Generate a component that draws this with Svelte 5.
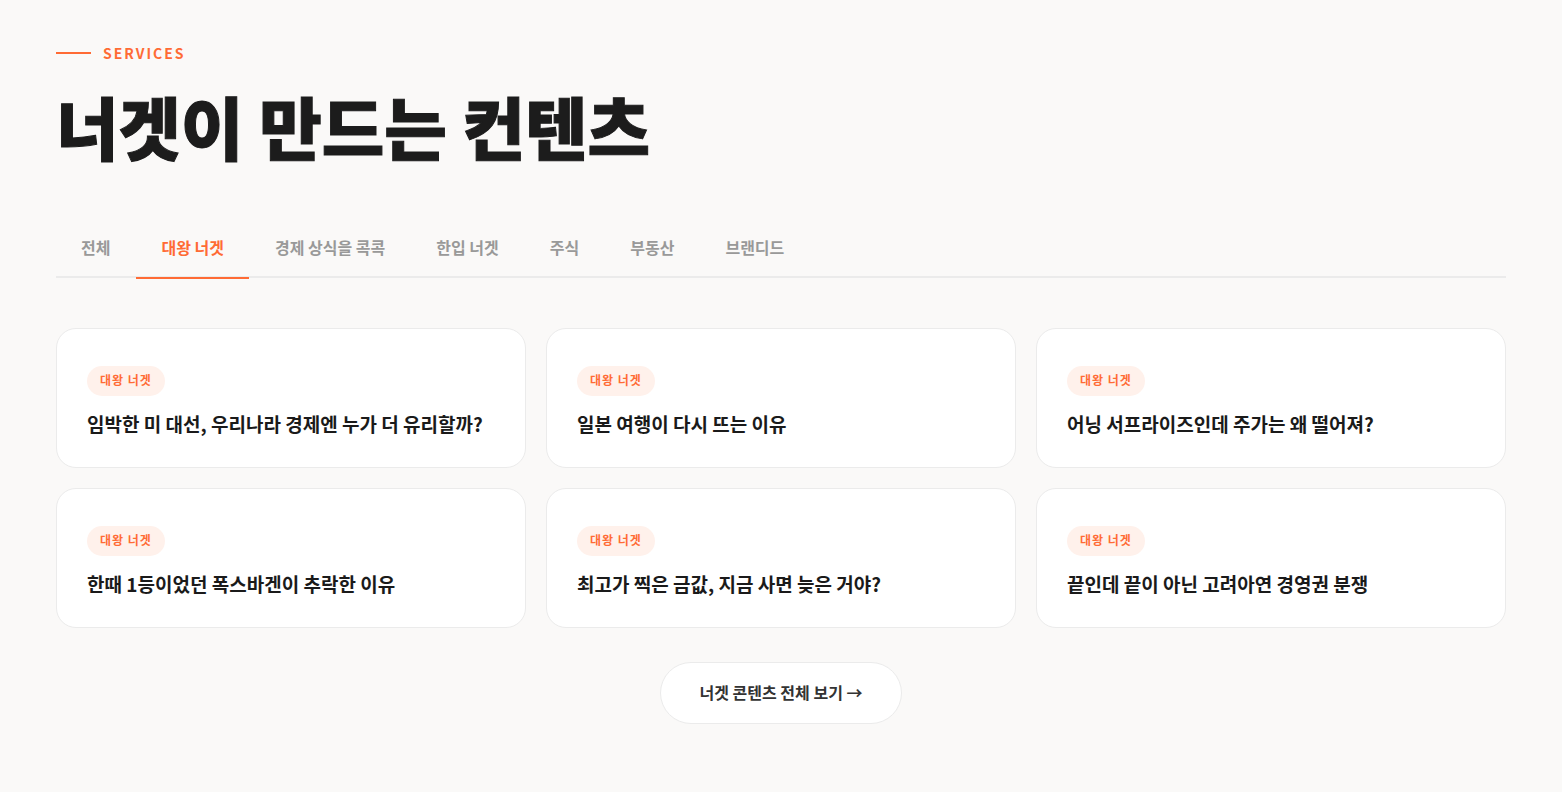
<script lang="ts">
	const tabs = ['전체', '대왕 너겟', '경제 상식을 콕콕', '한입 너겟', '주식', '부동산', '브랜디드'];

	const posts = [
		{ category: '대왕 너겟', title: '임박한 미 대선, 우리나라 경제엔 누가 더 유리할까?' },
		{ category: '대왕 너겟', title: '일본 여행이 다시 뜨는 이유' },
		{ category: '대왕 너겟', title: '어닝 서프라이즈인데 주가는 왜 떨어져?' },
		{ category: '대왕 너겟', title: '한때 1등이었던 폭스바겐이 추락한 이유' },
		{ category: '대왕 너겟', title: '최고가 찍은 금값, 지금 사면 늦은 거야?' },
		{ category: '대왕 너겟', title: '끝인데 끝이 아닌 고려아연 경영권 분쟁' }
	];

	let active = $state('대왕 너겟');
	let visible = $derived(active === '전체' ? posts : posts.filter((p) => p.category === active));
</script>

<section class="services">
	<p class="eyebrow">SERVICES</p>
	<h2>너겟이 만드는 컨텐츠</h2>

	<div class="tabs" role="tablist">
		{#each tabs as tab}
			<button
				class="tab"
				class:active={tab === active}
				role="tab"
				aria-selected={tab === active}
				onclick={() => (active = tab)}>{tab}</button
			>
		{/each}
	</div>

	<div class="grid">
		{#each visible as post}
			<a class="card" href="#post">
				<span class="tag">{post.category}</span>
				<h3>{post.title}</h3>
			</a>
		{/each}
	</div>

	<div class="more">
		<a class="more-link" href="#all">너겟 콘텐츠 전체 보기 →</a>
	</div>
</section>

<style>
	:global(body) {
		background: #faf9f8;
	}
	.services {
		padding: 41px 56px 68px;
		font-family: 'Noto Sans CJK KR', sans-serif;
		color: #1a1a1a;
	}
	.eyebrow {
		display: flex;
		align-items: center;
		gap: 12px;
		margin: 0;
		font-size: 14px;
		font-weight: 700;
		line-height: 24px;
		letter-spacing: 2px;
		color: #ff6b35;
	}
	.eyebrow::before {
		content: '';
		width: 35px;
		height: 2px;
		background: #ff6b35;
	}
	h2 {
		margin: 18px 0 47px;
		font-size: 68px;
		font-weight: 900;
		line-height: 86px;
		color: #1c1c1c;
		-webkit-text-stroke: 1px #1c1c1c;
	}
	.tabs {
		display: flex;
		gap: 1px;
		margin-bottom: 50px;
		border-bottom: 2px solid #ebebeb;
	}
	.tab {
		margin-bottom: -3px;
		padding: 17px 25px 16px;
		border: 0;
		border-bottom: 2px solid transparent;
		background: none;
		font: inherit;
		font-size: 16px;
		font-weight: 700;
		line-height: 28px;
		color: #999;
		cursor: pointer;
	}
	.tab.active {
		border-bottom-color: #ff6b35;
		color: #ff6b35;
	}
	.grid {
		display: grid;
		grid-template-columns: repeat(3, 1fr);
		gap: 20px;
	}
	.card {
		padding: 37px 30px 28px;
		border: 1px solid #ebebeb;
		border-radius: 20px;
		background: #fff;
		color: inherit;
		text-decoration: none;
	}
	.tag {
		display: inline-block;
		padding: 3px 13px 5px;
		border-radius: 15px;
		background: #fff1eb;
		font-size: 12px;
		font-weight: 700;
		line-height: 22px;
		letter-spacing: 1px;
		color: #ff6b35;
	}
	h3 {
		margin: 13px 0 0;
		font-size: 19px;
		font-weight: 700;
		line-height: 30px;
	}
	.more {
		margin-top: 34px;
		text-align: center;
	}
	.more-link {
		display: inline-block;
		padding: 15px 38px 17px;
		border: 1px solid #ebebeb;
		border-radius: 31px;
		background: #fff;
		font-size: 16px;
		font-weight: 700;
		line-height: 28px;
		color: #333;
		text-decoration: none;
	}
</style>
